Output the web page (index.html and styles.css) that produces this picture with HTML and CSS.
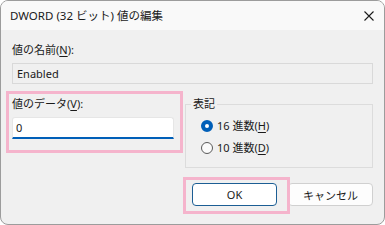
FILE: index.html
```html
<!DOCTYPE html>
<html lang="ja">
<head>
    <meta charset="UTF-8">
    <title>DWORD (32 ビット) 値の編集</title>
    <link rel="stylesheet" href="styles.css">
</head>
<body>
    <div class="window">
        <div class="titlebar">
            <span class="title">DWORD (32 ビット) 値の編集</span>
            <svg class="close" width="10" height="10" viewBox="0 0 10 10">
                <path d="M0.5 0.5 L9.5 9.5 M9.5 0.5 L0.5 9.5" stroke="#1b1b1b" stroke-width="1.1" fill="none"/>
            </svg>
        </div>

        <div class="content">
            <label class="label">値の名前(<u>N</u>):</label>
            <div class="name-box">Enabled</div>

            <div class="row">
                <div class="data-col">
                    <label class="label" for="data">値のデータ(<u>V</u>):</label>
                    <input type="text" id="data" class="data-input" value="0">
                </div>

                <fieldset class="group">
                    <legend>表記</legend>
                    <div class="radio-row">
                        <span class="radio checked"></span>
                        <span>16 進数(<u>H</u>)</span>
                    </div>
                    <div class="radio-row">
                        <span class="radio"></span>
                        <span>10 進数(<u>D</u>)</span>
                    </div>
                </fieldset>
            </div>

            <div class="buttons">
                <button class="btn btn-default">OK</button>
                <button class="btn">キャンセル</button>
            </div>
        </div>

        <!-- highlight frames -->
        <div class="mark mark-data"></div>
        <div class="mark mark-ok"></div>
    </div>
</body>
</html>
```

FILE: styles.css
```css
* {
    margin: 0;
    padding: 0;
    box-sizing: border-box;
}

body {
    background: #ffffff;
    font-family: 'Segoe UI', 'Noto Sans', 'Noto Sans CJK JP', sans-serif;
    font-size: 11px;
    color: #1a1a1a;
}

.window {
    position: relative;
    width: 385px;
    height: 225px;
    border: 1px solid #9c9c9c;
    border-radius: 8px;
    background: #f0f0f0;
    overflow: hidden;
}

.titlebar {
    height: 29px;
    background: #f9f9f9;
    display: flex;
    align-items: center;
    justify-content: space-between;
    padding: 0 10px 0 9px;
    font-size: 11.5px;
}

.title {
    line-height: 16px;
    margin-top: 1px;
}

.close {
    margin-top: 1px;
}

.content {
    padding: 12px 11px 0 11px;
}

.label {
    display: block;
    line-height: 16px;
}

u {
    text-decoration-thickness: 1px;
    text-underline-offset: 2px;
}

.name-box {
    margin-top: 5px;
    height: 21px;
    border: 1px solid #d9d9d9;
    background: #f0f0f0;
    padding-left: 4px;
    line-height: 19px;
}

.row {
    display: flex;
    justify-content: space-between;
    margin-top: 12px;
}

.data-col {
    width: 162px;
}

.data-input {
    display: block;
    margin-top: 5px;
    width: 100%;
    height: 22px;
    border: 1px solid #e6e6e6;
    border-bottom: 2px solid #005fb8;
    border-radius: 3px 3px 0 0;
    background: #ffffff;
    padding-left: 3px;
    font: inherit;
    color: #1a1a1a;
    outline: none;
}

.group {
    width: 188px;
    border: 1px solid #dcdcdc;
    padding: 6px 0 11px 15px;
}

.group legend {
    padding: 0 2px;
    margin-left: -10px;
    line-height: 16px;
}

.radio-row {
    display: flex;
    align-items: center;
    gap: 4px;
    line-height: 16px;
}

.radio-row + .radio-row {
    margin-top: 6px;
}

.radio {
    width: 12px;
    height: 12px;
    border-radius: 50%;
    border: 1px solid #5a5a5a;
    background: #fbfbfb;
}

.radio.checked {
    border: 4px solid #005fb8;
    background: #ffffff;
}

.buttons {
    display: flex;
    justify-content: flex-end;
    gap: 11px;
    margin-top: 15px;
}

.btn {
    width: 85px;
    height: 23px;
    border: 1px solid #d0d0d0;
    border-radius: 4px;
    background: #fdfdfd;
    font: inherit;
    color: #1a1a1a;
}

.btn-default {
    border-color: #1c5e94;
    background: #ffffff;
}

.mark {
    position: absolute;
    border: 3px solid #f5b4cc;
}

.mark-data {
    left: 5px;
    top: 90px;
    width: 177px;
    height: 62px;
}

.mark-ok {
    left: 182px;
    top: 176px;
    width: 107px;
    height: 37px;
}
```
